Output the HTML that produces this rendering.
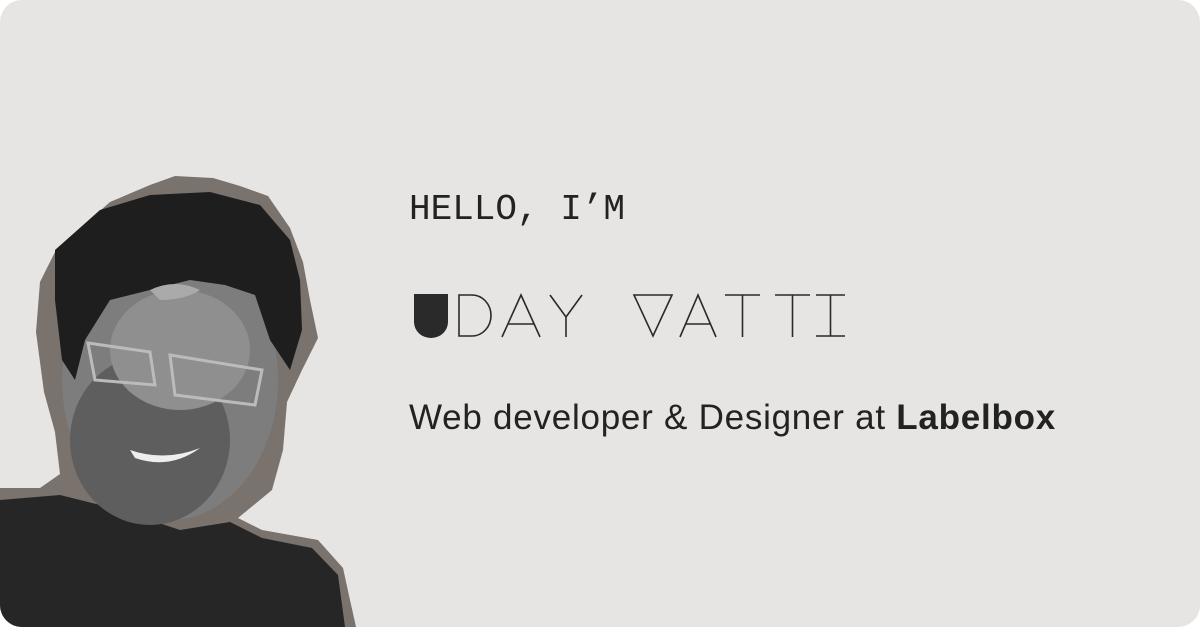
<!DOCTYPE html>
<html><head><style>
html,body{margin:0;padding:0;background:#fff;}
.card{position:relative;width:1200px;height:627px;background:#e6e5e3;border-radius:22px;overflow:hidden;}
.hello{position:absolute;left:409px;top:192px;font:36px/1 "Liberation Mono",monospace;color:#222;white-space:nowrap;}
.sub{position:absolute;left:409px;top:400px;font:35px/1 "Liberation Sans",sans-serif;color:#222;letter-spacing:0.75px;white-space:nowrap;}
.sub b{font-weight:bold;}
svg{position:absolute;left:0;top:0;}
</style></head><body>
<div class="card">
<svg width="1200" height="627">
 <polygon fill="#79726d" points="150,185 175,176 213,178 240,186 268,196 290,228 303,262 310,300 318,338 302,370 287,402 283,450 272,490 238,518 262,530 318,540 343,568 350,600 356,627 0,627 0,488 40,488 60,474 55,432 44,392 36,332 40,282 56,250 110,202"/>
 <g>
  <path fill="#262626" d="M0,500 L60,495 L120,510 L180,530 L230,522 L262,538 L312,548 L338,575 L345,627 L0,627Z"/>
  <ellipse cx="170" cy="380" rx="108" ry="140" fill="#7d7d7d"/>
  <ellipse cx="150" cy="440" rx="80" ry="85" fill="#5e5e5e"/>
  <ellipse cx="180" cy="350" rx="70" ry="60" fill="#8f8f8f"/>
  <path fill="#1e1e1e" d="M55,250 L100,210 L150,195 L210,192 L260,205 L290,240 L300,280 L302,330 L290,370 L270,340 L255,295 L225,285 L190,280 L150,290 L110,300 L85,340 L75,380 L62,360 L55,300Z"/>
  <path fill="#aaa" d="M150,290 Q175,278 200,290 Q185,300 160,300Z"/>
  <path fill="none" stroke="#bbb" stroke-width="3" d="M88,343 L150,352 L155,385 L95,380Z M170,355 L262,370 L255,405 L175,395Z"/>
  <path fill="#eee" d="M130,450 Q165,462 200,448 Q170,470 135,458Z"/>
 </g>
 <g stroke="#2a2a2a" stroke-width="1.6" fill="none">
  <path fill="#2a2a2a" stroke="none" d="M414,294 H448 V322 A17,16 0 0 1 414,322Z"/>
  <path d="M459,295 V336 H472 A19,20.5 0 0 0 472,295 Z"/>
  <path d="M502,337 L521,295 L540,337 M508,324 H534"/>
  <path d="M550,295 L566,317 L582,295 M566,317 V337"/>
  <path d="M634,295 H672 L653,336 Z"/>
  <path d="M680,337 L698,295 L716,337 M686,324 H710"/>
  <path d="M725,295 H760 M742.5,295 V337"/>
  <path d="M775,295 H810 M792.5,295 V337"/>
  <path d="M816,295 H845 M816,336 H845 M830.5,295 V336"/>
 </g>
</svg>
<div class="hello">HELLO, I’M</div>
<div class="sub">Web developer &amp; Designer at <b>Labelbox</b></div>
</div>
</body></html>
